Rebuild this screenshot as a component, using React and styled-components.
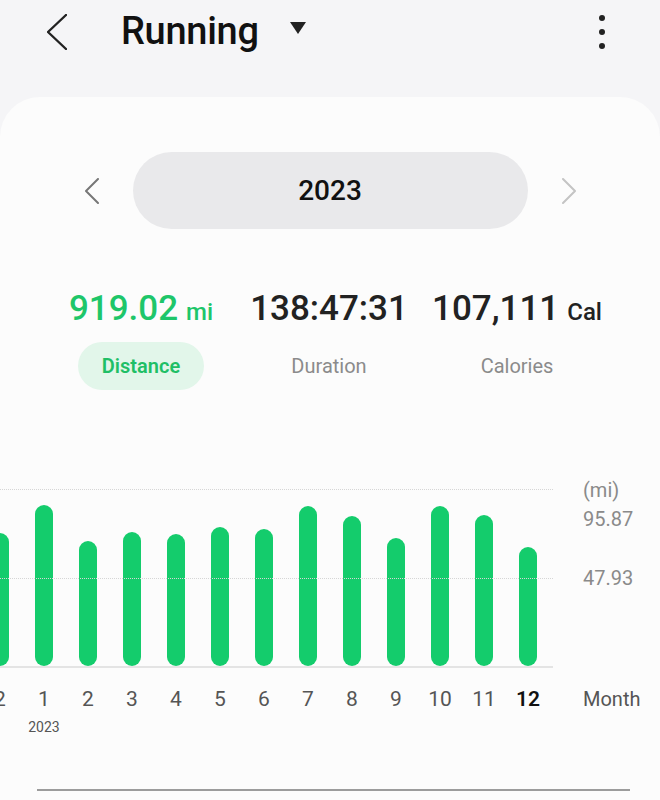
import React from 'react'
import styled, { createGlobalStyle } from 'styled-components'

const GlobalStyle = createGlobalStyle`
  body {
    margin: 0;
    background: #f5f5f7;
    font-family: Roboto, "Liberation Sans", sans-serif;
  }
`

const Page = styled.div`
  width: 660px;
  height: 800px;
  overflow: hidden;
  display: flex;
  flex-direction: column;
`

const Header = styled.div`
  height: 64px;
  margin-bottom: 33px;
  display: flex;
  align-items: center;
  padding: 0 0 0 47px;
`

const BackBtn = styled.div`
  width: 20px;
  height: 36px;
  margin-right: 54px;
  display: flex;
`

const Title = styled.div`
  font-size: 38px;
  font-weight: 500;
  color: #111;
  letter-spacing: -0.3px;
  margin-top: -2px;
`

const Caret = styled.div`
  width: 0;
  height: 0;
  border-left: 8px solid transparent;
  border-right: 8px solid transparent;
  border-top: 12px solid #222;
  margin-left: 31px;
  margin-top: -8px;
`

const Kebab = styled.div`
  margin-left: auto;
  margin-right: 55px;
  display: flex;
  flex-direction: column;
  gap: 8px;
  span {
    width: 6px;
    height: 6px;
    border-radius: 50%;
    background: #222;
  }
`

const Card = styled.div`
  flex: 1;
  background: #fcfcfc;
  border-radius: 40px 40px 0 0;
  padding-top: 55px;
  display: flex;
  flex-direction: column;
`

const YearRow = styled.div`
  display: flex;
  justify-content: center;
  align-items: center;
  gap: 34px;
`

const Pill = styled.div`
  width: 395px;
  height: 77px;
  border-radius: 39px;
  background: #e9e9eb;
  display: flex;
  align-items: center;
  justify-content: center;
  font-size: 28px;
  font-weight: 500;
  color: #111;
`

const Stats = styled.div`
  display: grid;
  grid-template-columns: repeat(3, 188px);
  padding: 0 47px;
  margin-top: 60px;
  row-gap: 10px;
`

const Value = styled.div`
  text-align: center;
  font-size: 35px;
  line-height: 40px;
  font-weight: 500;
  color: ${p => (p.$active ? '#1ec66a' : '#222')};
  white-space: nowrap;
  small {
    font-size: 24px;
    margin-left: 8px;
  }
`

const StatLabel = styled.div`
  justify-self: center;
  height: 48px;
  padding: 0 24px;
  border-radius: 24px;
  display: flex;
  align-items: center;
  font-size: 20px;
  font-weight: ${p => (p.$active ? 600 : 400)};
  color: ${p => (p.$active ? '#1fbf66' : '#8b8b8b')};
  background: ${p => (p.$active ? '#e2f6ea' : 'transparent')};
`

const ChartRow = styled.div`
  display: flex;
  margin-top: 99px;
`

const PlotWrap = styled.div`
  width: 553px;
  flex-shrink: 0;
`

const Plot = styled.div`
  position: relative;
  height: 177px;
  border-bottom: 2px solid #e4e4e4;
`

const GridLine = styled.div`
  position: absolute;
  left: 0;
  right: 0;
  top: ${p => p.$top}px;
  border-top: 1px dotted #d6d6d6;
`

const Columns = styled.div`
  display: flex;
  margin-left: -22px;
  height: 100%;
  align-items: flex-end;
`

const Col = styled.div`
  width: 44px;
  flex-shrink: 0;
  display: flex;
  justify-content: center;
`

const Bar = styled.div`
  width: 18px;
  border-radius: 9px;
  background: #14cc6c;
`

const LabelRow = styled.div`
  display: flex;
  margin-left: -22px;
  margin-top: 19px;
`

const LabelCol = styled.div`
  width: 44px;
  flex-shrink: 0;
  display: flex;
  flex-direction: column;
  align-items: center;
`

const Tick = styled.div`
  font-size: 21px;
  line-height: 24px;
  color: ${p => (p.$current ? '#111' : '#555')};
  font-weight: ${p => (p.$current ? 600 : 400)};
`

const YearTick = styled.div`
  font-size: 14px;
  line-height: 16px;
  margin-top: 8px;
  color: #555;
`

const AxisCol = styled.div`
  margin-left: 30px;
  display: flex;
  flex-direction: column;
  font-size: 20px;
  line-height: 24px;
`

const AxisText = styled.div`
  margin-top: ${p => p.$mt}px;
  color: ${p => (p.$dark ? '#555' : '#8a8a8a')};
`

const BottomLine = styled.div`
  margin: auto 30px 9px 37px;
  height: 2px;
  background: #9c9c9c;
`

const Chevron = ({ dir, color, w = 14, h = 26, sw = 2 }) => (
  <svg width={w} height={h} viewBox={`0 0 ${w} ${h}`}>
    <path
      d={dir === 'left' ? `M${w - 1} 1 L1 ${h / 2} L${w - 1} ${h - 1}` : `M1 1 L${w - 1} ${h / 2} L1 ${h - 1}`}
      fill="none"
      stroke={color}
      strokeWidth={sw}
      strokeLinecap="round"
      strokeLinejoin="round"
    />
  </svg>
)

const bars = [133, 161, 125, 134, 132, 139, 137, 160, 150, 128, 160, 151, 119]
const ticks = ['2', '1', '2', '3', '4', '5', '6', '7', '8', '9', '10', '11', '12']

export default function App() {
  return (
    <Page>
      <GlobalStyle />
      <Header>
        <BackBtn>
          <Chevron dir="left" color="#222" w={20} h={36} sw={2.4} />
        </BackBtn>
        <Title>Running</Title>
        <Caret />
        <Kebab>
          <span />
          <span />
          <span />
        </Kebab>
      </Header>
      <Card>
        <YearRow>
          <Chevron dir="left" color="#777" />
          <Pill>2023</Pill>
          <Chevron dir="right" color="#c4c4c4" />
        </YearRow>
        <Stats>
          <Value $active>
            919.02<small>mi</small>
          </Value>
          <Value>138:47:31</Value>
          <Value>
            107,111<small>Cal</small>
          </Value>
          <StatLabel $active>Distance</StatLabel>
          <StatLabel>Duration</StatLabel>
          <StatLabel>Calories</StatLabel>
        </Stats>
        <ChartRow>
          <PlotWrap>
            <Plot>
              <GridLine $top={0} />
              <GridLine $top={89} />
              <Columns>
                {bars.map((h, i) => (
                  <Col key={i}>
                    <Bar style={{ height: h }} />
                  </Col>
                ))}
              </Columns>
            </Plot>
            <LabelRow>
              {ticks.map((t, i) => (
                <LabelCol key={i}>
                  <Tick $current={i === 12}>{t}</Tick>
                  {i === 1 && <YearTick>2023</YearTick>}
                </LabelCol>
              ))}
            </LabelRow>
          </PlotWrap>
          <AxisCol>
            <AxisText $mt={-11}>(mi)</AxisText>
            <AxisText $mt={5}>95.87</AxisText>
            <AxisText $mt={35}>47.93</AxisText>
            <AxisText $mt={97} $dark>Month</AxisText>
          </AxisCol>
        </ChartRow>
        <BottomLine />
      </Card>
    </Page>
  )
}
